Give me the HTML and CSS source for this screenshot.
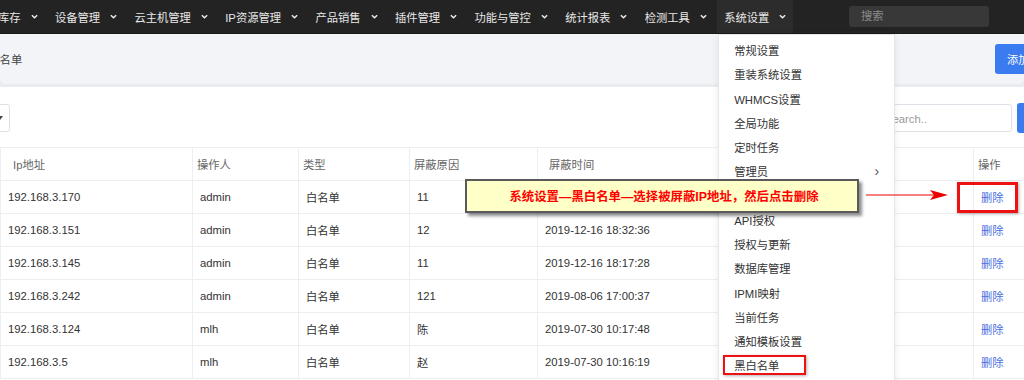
FILE: index.html
```html
<!DOCTYPE html>
<html lang="zh-CN">
<head>
  <meta charset="UTF-8" />
  <title>黑白名单</title>
  <link rel="stylesheet" href="styles.css">
</head>
<body>
  <header class="topnav">
    <ul class="nav-list">
      <li class="nav-item">库存 <svg class="chev" viewBox="0 0 8 5"><path d="M1 1l3 3 3-3"/></svg></li>
      <li class="nav-item">设备管理 <svg class="chev" viewBox="0 0 8 5"><path d="M1 1l3 3 3-3"/></svg></li>
      <li class="nav-item">云主机管理 <svg class="chev" viewBox="0 0 8 5"><path d="M1 1l3 3 3-3"/></svg></li>
      <li class="nav-item">IP资源管理 <svg class="chev" viewBox="0 0 8 5"><path d="M1 1l3 3 3-3"/></svg></li>
      <li class="nav-item">产品销售 <svg class="chev" viewBox="0 0 8 5"><path d="M1 1l3 3 3-3"/></svg></li>
      <li class="nav-item">插件管理 <svg class="chev" viewBox="0 0 8 5"><path d="M1 1l3 3 3-3"/></svg></li>
      <li class="nav-item">功能与管控 <svg class="chev" viewBox="0 0 8 5"><path d="M1 1l3 3 3-3"/></svg></li>
      <li class="nav-item">统计报表 <svg class="chev" viewBox="0 0 8 5"><path d="M1 1l3 3 3-3"/></svg></li>
      <li class="nav-item">检测工具 <svg class="chev" viewBox="0 0 8 5"><path d="M1 1l3 3 3-3"/></svg></li>
      <li class="nav-item active">系统设置 <svg class="chev" viewBox="0 0 8 5"><path d="M1 1l3 3 3-3"/></svg>
        <!-- open dropdown -->
        <ul class="dropdown">
          <li>常规设置</li>
          <li>重装系统设置</li>
          <li>WHMCS设置</li>
          <li>全局功能</li>
          <li>定时任务</li>
          <li class="has-sub">管理员 <span class="sub-arrow">›</span></li>
          <li>日志设置</li>
          <li>API授权</li>
          <li>授权与更新</li>
          <li>数据库管理</li>
          <li>IPMI映射</li>
          <li>当前任务</li>
          <li>通知模板设置</li>
          <li>黑白名单</li>
        </ul>
      </li>
    </ul>
    <div class="nav-search">搜索</div>
  </header>

  <main class="main">
    <div class="page-head">
      <h1 class="page-title">黑白名单</h1>
      <button class="btn-primary btn-add">添加名单</button>
    </div>

    <section class="card">
      <div class="toolbar">
        <div class="select-box"><span class="caret"></span></div>
        <div class="search-box">Search..</div>
        <button class="btn-primary btn-search">搜索</button>
      </div>

      <table class="list">
        <colgroup>
          <col style="width:192px">
          <col style="width:106px">
          <col style="width:111px">
          <col style="width:128px">
          <col style="width:436px">
          <col style="width:80px">
        </colgroup>
        <thead>
          <tr>
            <th class="first">Ip地址</th>
            <th>操作人</th>
            <th>类型</th>
            <th>屏蔽原因</th>
            <th class="time">屏蔽时间</th>
            <th>操作</th>
          </tr>
        </thead>
        <tbody>
          <tr><td>192.168.3.170</td><td>admin</td><td>白名单</td><td>11</td><td></td><td><a class="del">删除</a></td></tr>
          <tr><td>192.168.3.151</td><td>admin</td><td>白名单</td><td>12</td><td>2019-12-16 18:32:36</td><td><a class="del">删除</a></td></tr>
          <tr><td>192.168.3.145</td><td>admin</td><td>白名单</td><td>11</td><td>2019-12-16 18:17:28</td><td><a class="del">删除</a></td></tr>
          <tr><td>192.168.3.242</td><td>admin</td><td>白名单</td><td>121</td><td>2019-08-06 17:00:37</td><td><a class="del">删除</a></td></tr>
          <tr><td>192.168.3.124</td><td>mlh</td><td>白名单</td><td>陈</td><td>2019-07-30 10:17:48</td><td><a class="del">删除</a></td></tr>
          <tr><td>192.168.3.5</td><td>mlh</td><td>白名单</td><td>赵</td><td>2019-07-30 10:16:19</td><td><a class="del">删除</a></td></tr>
        </tbody>
      </table>
    </section>
  </main>

  <!-- tutorial annotations -->
  <div class="callout">系统设置—黑白名单—选择被屏蔽IP地址，然后点击删除</div>
  <svg class="arrow" viewBox="0 0 86 12" width="86" height="12">
    <line x1="0" y1="6" x2="70" y2="6" stroke="#e00" stroke-width="1.2"/>
    <polygon points="64,1 82,6 64,11 68,6" fill="#e00"/>
  </svg>
  <div class="mark mark-del"></div>
  <div class="mark mark-menu"></div>
</body>
</html>
```

FILE: styles.css
```css
html, body {
  margin: 0;
  padding: 0;
}

body {
  position: relative;
  width: 1024px;
  height: 380px;
  overflow: hidden;
  font-family: "Liberation Sans", "Noto Sans CJK SC", sans-serif;
  font-size: 11.3px;
  color: #333;
  background: #ebecf0;
}

/* top navigation */
.topnav {
  display: flex;
  align-items: center;
  height: 33px;
  background: #232323;
  border-bottom: 1px solid #1a1a1a;
}

.nav-list {
  display: flex;
  gap: 3.3px;
  height: 100%;
  margin: 0 0 0 -9px;
  padding: 0;
  list-style: none;
}

.nav-item {
  position: relative;
  display: flex;
  align-items: center;
  padding: 0 7px;
  color: #e8e8e8;
  white-space: nowrap;
}

.nav-item.active {
  background: #2c2c2c;
}

.chev {
  width: 7px;
  height: 5px;
  margin-left: 10px;
  fill: none;
  stroke: #eee;
  stroke-width: 1.7;
}

.nav-search {
  width: 128px;
  height: 21px;
  line-height: 21px;
  margin-left: auto;
  margin-right: 35px;
  padding-left: 12px;
  background: #383838;
  border-radius: 3px;
  color: #8a8a8a;
}

/* dropdown */
.dropdown {
  position: absolute;
  top: 34px;
  left: 1px;
  z-index: 5;
  width: 175px;
  height: 360px;
  margin: 0;
  padding: 3px 0 0;
  list-style: none;
  background: #fff;
  border: 1px solid #e4e6ea;
  box-shadow: 0 2px 8px rgba(0, 0, 0, 0.08);
  color: #333;
}

.dropdown li {
  display: flex;
  align-items: center;
  height: 24.25px;
  padding-left: 15px;
}

.sub-arrow {
  margin-left: auto;
  margin-right: 15px;
  font-size: 14px;
  color: #555;
}

/* page */
.page-head {
  display: flex;
  align-items: center;
  justify-content: space-between;
  height: 50px;
  background: #f3f4f7;
  border-radius: 0 0 6px 6px;
}

.page-title {
  margin: 0 0 0 -23px;
  font-size: 11.3px;
  font-weight: normal;
  color: #444;
}

.btn-primary {
  height: 30px;
  border: none;
  border-radius: 3px;
  background: #3a7bf0;
  color: #fff;
  font-family: inherit;
  font-size: 11.3px;
}

.btn-add {
  width: 80px;
  margin-right: -51px;
  padding-left: 12px;
  text-align: left;
}

.card {
  margin-top: 3px;
  height: 300px;
  background: #fff;
  padding-top: 16px;
}

.toolbar {
  display: flex;
  align-items: center;
  height: 30px;
}

.select-box {
  display: flex;
  align-items: center;
  justify-content: flex-end;
  width: 60px;
  height: 28px;
  margin-left: -50px;
  padding-right: 6px;
  box-sizing: border-box;
  border: 1px solid #dde2e8;
  border-radius: 3px;
}

.caret {
  width: 0;
  height: 0;
  border-left: 3px solid transparent;
  border-right: 3px solid transparent;
  border-top: 4px solid #444;
}

.search-box {
  width: 140px;
  height: 28px;
  line-height: 28px;
  margin-left: auto;
  padding-left: 12px;
  box-sizing: border-box;
  border: 1px solid #dde2e8;
  border-radius: 3px;
  color: #999;
}

.btn-search {
  width: 40px;
  margin-left: 5px;
  margin-right: -33px;
}

/* table */
.list {
  margin-top: 14px;
  width: 1053px;
  border-collapse: collapse;
  table-layout: fixed;
}

.list th,
.list td {
  height: 32px;
  padding: 0 7px;
  text-align: left;
  border: 1px solid #eceef1;
  white-space: nowrap;
}

.list th {
  padding-left: 4px;
  font-weight: normal;
  color: #666;
}

.list th.first {
  padding-left: 12px;
}

.list th.time {
  padding-left: 11px;
}

.del {
  color: #4a6fe0;
}

/* annotations */
.callout {
  position: absolute;
  left: 465px;
  top: 179px;
  z-index: 10;
  width: 394px;
  height: 34px;
  box-sizing: border-box;
  display: flex;
  align-items: center;
  justify-content: center;
  padding-left: 4px;
  background: #ffffc8;
  border: 2px solid #5a5a5a;
  box-shadow: 3px 3px 3px rgba(0, 0, 0, 0.45);
  color: #f00;
  font-size: 12.4px;
  font-weight: bold;
}

.arrow {
  position: absolute;
  left: 866px;
  top: 189px;
  z-index: 10;
}

.mark {
  position: absolute;
  z-index: 10;
  box-sizing: border-box;
  border: 3px solid #ee1111;
  box-shadow: 1px 1px 3px rgba(0, 0, 0, 0.3);
}

.mark-del {
  left: 957px;
  top: 182px;
  width: 61px;
  height: 31px;
}

.mark-menu {
  left: 723px;
  top: 355px;
  width: 83px;
  height: 20px;
  border-width: 2px;
}
```
